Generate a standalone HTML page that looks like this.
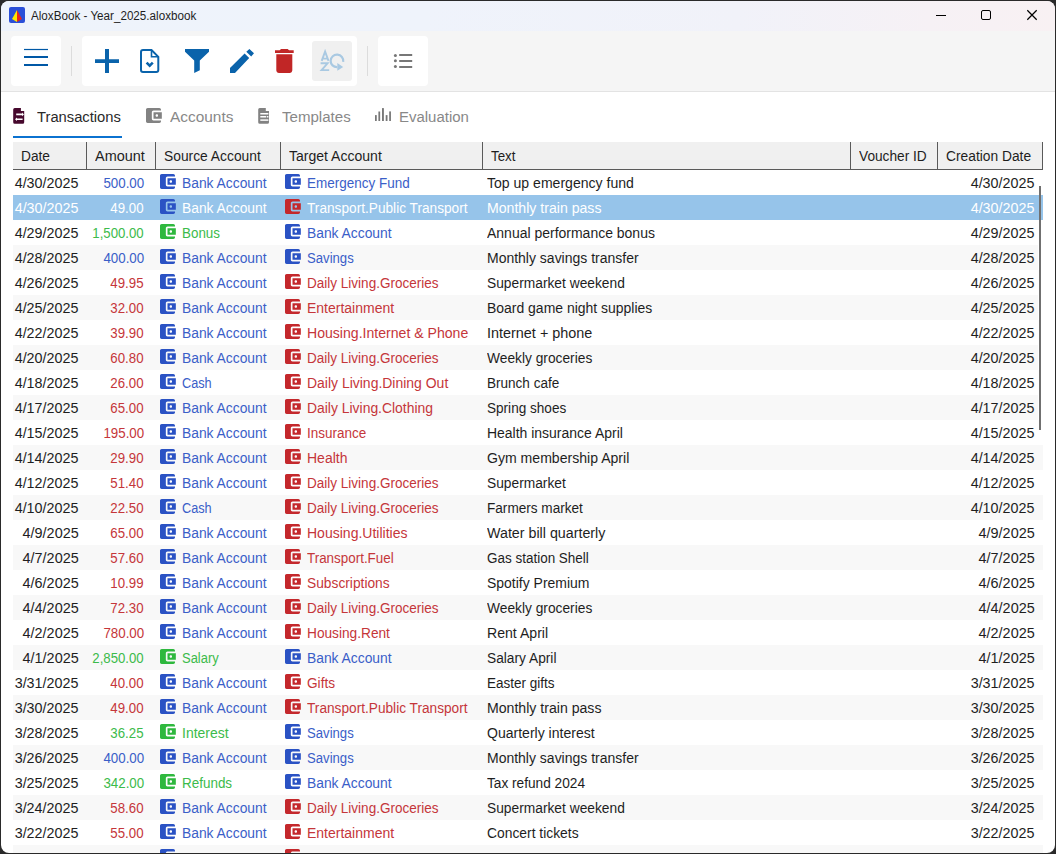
<!DOCTYPE html>
<html><head><meta charset="utf-8"><title>AloxBook - Year_2025.aloxbook</title>
<style>
*{box-sizing:border-box;margin:0;padding:0}
html,body{width:1056px;height:854px;overflow:hidden;background:#2a2a2a}
body{font-family:"Liberation Sans",sans-serif;position:relative;color:#1e1e1e}
#win{position:absolute;left:1px;top:1px;width:1054px;height:852px;border-radius:8px;background:#fff;overflow:hidden}
#title{position:absolute;left:0;top:0;width:1054px;height:30px;background:linear-gradient(90deg,#eef3fb 0%,#eff3fb 40%,#f1f2f9 70%,#f6f1f5 88%,#f8f1f3 100%)}
#title .tt{position:absolute;left:30px;top:7px;font-size:12px;line-height:16px;white-space:nowrap;transform-origin:0 50%;display:inline-block}
#tool{position:absolute;left:0;top:30px;width:1054px;height:61px;background:#f5f5f5;border-bottom:1px solid #e3e3e3}
.panel{position:absolute;top:5px;height:50px;background:#fff;border-radius:4px}
.vsep{position:absolute;top:15px;width:1px;height:30px;background:#dcdcdc}
svg{position:absolute;overflow:visible}
.tab{position:absolute;top:0;font-size:15.5px;line-height:20px;white-space:nowrap;display:inline-block;transform-origin:0 50%}
#grid{position:absolute;left:12px;top:141px;width:1030px;height:711px}
#hdr{position:absolute;left:0;top:0;width:1030px;height:28px;background:#f0f0f0;border-bottom:1px solid #5a5a5a}
#hdr span{position:absolute;top:6px;font-size:13.8px;line-height:18px;white-space:nowrap;transform-origin:0 50%;display:inline-block}
#hdr i{position:absolute;top:0;width:1px;height:28px;background:#5a5a5a}
#rows{position:absolute;left:0;top:28px;width:1030px;height:683px;overflow:hidden}
.row{position:absolute;left:0;width:1030px;height:25px}
.row.alt{background:#f8f8f8}
.row.sel{background:#96c4ea;color:#fff}
.c{position:absolute;top:5px;font-size:13.8px;line-height:18px;white-space:nowrap;display:inline-block}
.c.d{right:964.4px;transform-origin:100% 50%}
.c.a{right:899.3px;transform-origin:100% 50%}
.c.s{left:168.8px;transform-origin:0 50%}
.c.t{left:293.7px;transform-origin:0 50%}
.c.x{left:473.8px;transform-origin:0 50%}
.c.e{right:8.3px;transform-origin:100% 50%}
.b{color:#3a5ec8;fill:#2a52c4}
.r{color:#c5363a;fill:#c4282c}
.g{color:#3cbb4b;fill:#2eb83e}
.sel .c{color:#fff}
.i{width:21px;height:21px;top:1px}
.i.s{left:144px}
.i.t{left:269px}
</style></head><body>
<svg width="0" height="0" style="position:absolute"><defs>
<symbol id="w" viewBox="0 0 24 24"><path d="M21 18v1c0 1.1-.9 2-2 2H5c-1.11 0-2-.9-2-2V5c0-1.1.89-2 2-2h14c1.1 0 2 .9 2 2v1h-9c-1.11 0-2 .9-2 2v8c0 1.1.89 2 2 2h9zm-9-2h10V8H12v8zm4-2.500c-.83 0-1.500-.67-1.500-1.500s.67-1.500 1.500-1.500 1.500.67 1.500 1.500-.67 1.500-1.500 1.500z"/></symbol>
</defs></svg>
<div id="win">
<div id="title">
 <svg style="left:8px;top:6px" width="16" height="16" viewBox="0 0 16 16"><rect width="16" height="16" rx="2" fill="#2a4fd8"/><path d="M8 3 L8 15 L3 12 Z" fill="#ffe600"/><path d="M8 3 L13 12 L8 15 Z" fill="#e8261c"/></svg>
 <span class="tt" style="transform:scaleX(0.9712)">AloxBook - Year_2025.aloxbook</span>
 <svg style="left:0;top:0" width="1054" height="30" viewBox="1 1 1054 30"><g fill="none" stroke="#000"><path d="M936 15.500H946" stroke-width="1"/><rect x="981.500" y="10.500" width="9" height="9" rx="1.500" stroke-width="1"/><path d="M1027.300 10.300L1036.700 19.700M1036.700 10.300L1027.300 19.700" stroke-width="1.250"/></g></svg>
</div>
<div id="tool">
 <div class="panel" style="left:10px;width:50px"></div>
 <div class="vsep" style="left:70px"></div>
 <div class="panel" style="left:81px;width:275px"></div>
 <div class="vsep" style="left:366px"></div>
 <div class="panel" style="left:377px;width:50px"></div>
 <!-- hamburger -->
 <svg style="left:0;top:0" width="440" height="61" viewBox="1 31 440 61">
  <g fill="#0058a6">
   <rect x="24" y="48.900" width="24" height="1.200"/><rect x="24" y="56" width="24" height="2"/><rect x="24" y="64" width="24" height="2"/>
  </g>
  <g fill="#0a63ab">
   <path d="M95 59.200H105V49H109V59.200H119V63H109V73H105V63H95Z"/>
   <path d="M185 49H209V51.800L199.800 60.500V70.200L194.200 73V60.500L185 51.800Z"/>
   <path d="M230 73V68L244.600 53.500L249.200 58L235 73ZM246.300 51.800L249.400 49L254 53.200L251.200 56.500Z"/>
  </g>
  <g fill="none" stroke="#0a63ab" stroke-width="2">
   <path d="M143 50H151.500L158.300 56.800V70a2 2 0 0 1 -2 2H143a2 2 0 0 1 -2 -2V52a2 2 0 0 1 2 -2Z"/>
   <path d="M151.500 50V56.800H158.300" stroke-width="1.600"/>
   <path d="M146.600 62.600L149.700 65.600L152.800 62.600" stroke-width="2.600"/>
  </g>
  <path fill="#c12626" d="M276.300 70.300c0 1.470 1.200 2.670 2.670 2.670h10.670c1.470 0 2.670-1.200 2.670-2.670V54.300H276.300zM293.700 50.300h-4.670l-1.330-1.330h-6.670l-1.330 1.330H275v2.670h18.700z"/>
  <rect x="312" y="41" width="40" height="40" rx="3" fill="#f0f0f0"/>
  <g fill="none" stroke="#a9c9e2" stroke-width="1.900">
   <path d="M321.700 60.800L325.100 51.600L328.500 60.800M322.400 58.600H327.800"/>
   <path d="M320.600 63.300H327.600L321.600 70.100H329.200"/>
   <path d="M343.200 61.800A6.300 6.300 0 1 0 337.200 67.200" stroke-width="2.200"/>
  </g>
  <path fill="#a9c9e2" d="M337.300 63.100L343.200 67L337.300 70.800Z"/>
  <g fill="#777">
   <circle cx="395.400" cy="55.400" r="1.500"/><circle cx="395.400" cy="60.700" r="1.500"/><circle cx="395.400" cy="66.400" r="1.500"/>
   <rect x="399.200" y="54" width="13" height="2"/><rect x="399.200" y="60" width="13" height="2"/><rect x="399.200" y="66" width="13" height="2"/>
  </g>
 </svg>
</div>
<div id="tabs" style="position:absolute;left:0;top:92px;width:1054px;height:48px">
 <svg style="left:12px;top:15px" width="12" height="16" viewBox="0 0 12 16"><path fill="#46082d" d="M1.700 0H7.900V3H11.200V14.300A1.500 1.500 0 0 1 9.700 15.800H1.700A1.500 1.500 0 0 1 0.200 14.300V1.500A1.500 1.500 0 0 1 1.700 0Z"/><path fill="#fff" d="M3.200 5.600H9V4.600L11 6.400L9 8.200V7.200H3.200ZM9.600 10.500H4V9.500L2 11.300L4 13.100V12.100H9.600Z"/></svg>
 <span class="tab" style="left:36px;top:14px;color:#2a2a2a;transform:scaleX(0.9517)">Transactions</span>
 <div style="position:absolute;left:12px;top:43px;width:109px;height:2px;background:#0b72d0"></div>
 <svg style="left:142px;top:12px;fill:#828282" width="21" height="21"><use href="#w" x="0.500" y="0.500" width="20" height="20"/></svg>
 <span class="tab" style="left:169px;top:14px;color:#888;transform:scaleX(0.9943)">Accounts</span>
 <svg style="left:257px;top:15px" width="12" height="16" viewBox="0 0 12 16"><path fill="#828282" d="M1.700 0H7.800V3H11V14.200A1.500 1.500 0 0 1 9.500 15.700H1.700A1.500 1.500 0 0 1 0.200 14.200V1.500A1.500 1.500 0 0 1 1.700 0Z"/><path fill="#fff" d="M2.300 5H10.400V6.500H2.300ZM2.300 7.900H8.200V9.600H2.300ZM8.900 7.900H10.400V9.600H8.900Z"/><path fill="#ececec" d="M2.300 11.200H10.400V12.900H2.300Z"/></svg>
 <span class="tab" style="left:281px;top:14px;color:#888;transform:scaleX(0.9723)">Templates</span>
 <svg style="left:374px;top:15px" width="16" height="13" viewBox="0 0 16 13"><g fill="#787878"><rect x="0" y="7.100" width="1.750" height="5.900"/><rect x="3.400" y="3.500" width="1.750" height="9.500"/><rect x="7" y="0.100" width="1.900" height="12.900"/><rect x="10.700" y="7.100" width="1.800" height="5.900"/><rect x="14.200" y="3.400" width="1.750" height="9.600"/></g></svg>
 <span class="tab" style="left:398px;top:14px;color:#888;transform:scaleX(0.9656)">Evaluation</span>
</div>
<div id="grid">
 <div id="hdr">
  <span style="left:8px;transform:scaleX(0.9948)">Date</span><i style="left:73px"></i>
  <span style="left:82px;transform:scaleX(1.0482)">Amount</span><i style="left:142px"></i>
  <span style="left:151px;transform:scaleX(1.0014)">Source Account</span><i style="left:267px"></i>
  <span style="left:276px;transform:scaleX(1.0170)">Target Account</span><i style="left:469px"></i>
  <span style="left:478px;transform:scaleX(0.9663)">Text</span><i style="left:837px"></i>
  <span style="left:846px;transform:scaleX(0.9923)">Voucher ID</span><i style="left:924px"></i>
  <span style="left:933px;transform:scaleX(0.9992)">Creation Date</span><i style="left:1029px"></i>
 </div>
 <div id="rows">
<div class="row" style="top:0px"><span class="c d" style="transform:scaleX(1.0380)">4/30/2025</span><span class="c a b" style="transform:scaleX(0.9660)">500.00</span><svg class="i s b"><use href="#w" x="0.500" y="0.500" width="20" height="20"/></svg><span class="c s b" style="transform:scaleX(1.0026)">Bank Account</span><svg class="i t b"><use href="#w" x="0.500" y="0.500" width="20" height="20"/></svg><span class="c t b" style="transform:scaleX(0.9779)">Emergency Fund</span><span class="c x" style="transform:scaleX(1.0182)">Top up emergency fund</span><span class="c e" style="transform:scaleX(1.0380)">4/30/2025</span></div>
<div class="row alt sel" style="top:25px"><span class="c d" style="transform:scaleX(1.0380)">4/30/2025</span><span class="c a r" style="transform:scaleX(0.9621)">49.00</span><svg class="i s b"><use href="#w" x="0.500" y="0.500" width="20" height="20"/></svg><span class="c s b" style="transform:scaleX(1.0026)">Bank Account</span><svg class="i t r"><use href="#w" x="0.500" y="0.500" width="20" height="20"/></svg><span class="c t r" style="transform:scaleX(0.9906)">Transport.Public Transport</span><span class="c x" style="transform:scaleX(1.0222)">Monthly train pass</span><span class="c e" style="transform:scaleX(1.0380)">4/30/2025</span></div>
<div class="row" style="top:50px"><span class="c d" style="transform:scaleX(1.0380)">4/29/2025</span><span class="c a g" style="transform:scaleX(0.9559)">1,500.00</span><svg class="i s g"><use href="#w" x="0.500" y="0.500" width="20" height="20"/></svg><span class="c s g" style="transform:scaleX(0.9711)">Bonus</span><svg class="i t b"><use href="#w" x="0.500" y="0.500" width="20" height="20"/></svg><span class="c t b" style="transform:scaleX(1.0026)">Bank Account</span><span class="c x" style="transform:scaleX(1.0135)">Annual performance bonus</span><span class="c e" style="transform:scaleX(1.0380)">4/29/2025</span></div>
<div class="row alt" style="top:75px"><span class="c d" style="transform:scaleX(1.0380)">4/28/2025</span><span class="c a b" style="transform:scaleX(0.9660)">400.00</span><svg class="i s b"><use href="#w" x="0.500" y="0.500" width="20" height="20"/></svg><span class="c s b" style="transform:scaleX(1.0026)">Bank Account</span><svg class="i t b"><use href="#w" x="0.500" y="0.500" width="20" height="20"/></svg><span class="c t b" style="transform:scaleX(0.9517)">Savings</span><span class="c x" style="transform:scaleX(1.0137)">Monthly savings transfer</span><span class="c e" style="transform:scaleX(1.0380)">4/28/2025</span></div>
<div class="row" style="top:100px"><span class="c d" style="transform:scaleX(1.0380)">4/26/2025</span><span class="c a r" style="transform:scaleX(0.9621)">49.95</span><svg class="i s b"><use href="#w" x="0.500" y="0.500" width="20" height="20"/></svg><span class="c s b" style="transform:scaleX(1.0026)">Bank Account</span><svg class="i t r"><use href="#w" x="0.500" y="0.500" width="20" height="20"/></svg><span class="c t r" style="transform:scaleX(0.9804)">Daily Living.Groceries</span><span class="c x" style="transform:scaleX(0.9984)">Supermarket weekend</span><span class="c e" style="transform:scaleX(1.0380)">4/26/2025</span></div>
<div class="row alt" style="top:125px"><span class="c d" style="transform:scaleX(1.0380)">4/25/2025</span><span class="c a r" style="transform:scaleX(0.9621)">32.00</span><svg class="i s b"><use href="#w" x="0.500" y="0.500" width="20" height="20"/></svg><span class="c s b" style="transform:scaleX(1.0026)">Bank Account</span><svg class="i t r"><use href="#w" x="0.500" y="0.500" width="20" height="20"/></svg><span class="c t r" style="transform:scaleX(1.0143)">Entertainment</span><span class="c x" style="transform:scaleX(1.0113)">Board game night supplies</span><span class="c e" style="transform:scaleX(1.0380)">4/25/2025</span></div>
<div class="row" style="top:150px"><span class="c d" style="transform:scaleX(1.0380)">4/22/2025</span><span class="c a r" style="transform:scaleX(0.9621)">39.90</span><svg class="i s b"><use href="#w" x="0.500" y="0.500" width="20" height="20"/></svg><span class="c s b" style="transform:scaleX(1.0026)">Bank Account</span><svg class="i t r"><use href="#w" x="0.500" y="0.500" width="20" height="20"/></svg><span class="c t r" style="transform:scaleX(1.0204)">Housing.Internet &amp; Phone</span><span class="c x" style="transform:scaleX(1.0446)">Internet + phone</span><span class="c e" style="transform:scaleX(1.0380)">4/22/2025</span></div>
<div class="row alt" style="top:175px"><span class="c d" style="transform:scaleX(1.0380)">4/20/2025</span><span class="c a r" style="transform:scaleX(0.9621)">60.80</span><svg class="i s b"><use href="#w" x="0.500" y="0.500" width="20" height="20"/></svg><span class="c s b" style="transform:scaleX(1.0026)">Bank Account</span><svg class="i t r"><use href="#w" x="0.500" y="0.500" width="20" height="20"/></svg><span class="c t r" style="transform:scaleX(0.9804)">Daily Living.Groceries</span><span class="c x" style="transform:scaleX(0.9973)">Weekly groceries</span><span class="c e" style="transform:scaleX(1.0380)">4/20/2025</span></div>
<div class="row" style="top:200px"><span class="c d" style="transform:scaleX(1.0380)">4/18/2025</span><span class="c a r" style="transform:scaleX(0.9621)">26.00</span><svg class="i s b"><use href="#w" x="0.500" y="0.500" width="20" height="20"/></svg><span class="c s b" style="transform:scaleX(0.9202)">Cash</span><svg class="i t r"><use href="#w" x="0.500" y="0.500" width="20" height="20"/></svg><span class="c t r" style="transform:scaleX(1.0122)">Daily Living.Dining Out</span><span class="c x" style="transform:scaleX(0.9808)">Brunch cafe</span><span class="c e" style="transform:scaleX(1.0380)">4/18/2025</span></div>
<div class="row alt" style="top:225px"><span class="c d" style="transform:scaleX(1.0380)">4/17/2025</span><span class="c a r" style="transform:scaleX(0.9621)">65.00</span><svg class="i s b"><use href="#w" x="0.500" y="0.500" width="20" height="20"/></svg><span class="c s b" style="transform:scaleX(1.0026)">Bank Account</span><svg class="i t r"><use href="#w" x="0.500" y="0.500" width="20" height="20"/></svg><span class="c t r" style="transform:scaleX(1.0081)">Daily Living.Clothing</span><span class="c x" style="transform:scaleX(0.9837)">Spring shoes</span><span class="c e" style="transform:scaleX(1.0380)">4/17/2025</span></div>
<div class="row" style="top:250px"><span class="c d" style="transform:scaleX(1.0380)">4/15/2025</span><span class="c a r" style="transform:scaleX(0.9660)">195.00</span><svg class="i s b"><use href="#w" x="0.500" y="0.500" width="20" height="20"/></svg><span class="c s b" style="transform:scaleX(1.0026)">Bank Account</span><svg class="i t r"><use href="#w" x="0.500" y="0.500" width="20" height="20"/></svg><span class="c t r" style="transform:scaleX(0.9769)">Insurance</span><span class="c x" style="transform:scaleX(1.0123)">Health insurance April</span><span class="c e" style="transform:scaleX(1.0380)">4/15/2025</span></div>
<div class="row alt" style="top:275px"><span class="c d" style="transform:scaleX(1.0380)">4/14/2025</span><span class="c a r" style="transform:scaleX(0.9621)">29.90</span><svg class="i s b"><use href="#w" x="0.500" y="0.500" width="20" height="20"/></svg><span class="c s b" style="transform:scaleX(1.0026)">Bank Account</span><svg class="i t r"><use href="#w" x="0.500" y="0.500" width="20" height="20"/></svg><span class="c t r" style="transform:scaleX(1.0136)">Health</span><span class="c x" style="transform:scaleX(1.0198)">Gym membership April</span><span class="c e" style="transform:scaleX(1.0380)">4/14/2025</span></div>
<div class="row" style="top:300px"><span class="c d" style="transform:scaleX(1.0380)">4/12/2025</span><span class="c a r" style="transform:scaleX(0.9621)">51.40</span><svg class="i s b"><use href="#w" x="0.500" y="0.500" width="20" height="20"/></svg><span class="c s b" style="transform:scaleX(1.0026)">Bank Account</span><svg class="i t r"><use href="#w" x="0.500" y="0.500" width="20" height="20"/></svg><span class="c t r" style="transform:scaleX(0.9804)">Daily Living.Groceries</span><span class="c x" style="transform:scaleX(0.9979)">Supermarket</span><span class="c e" style="transform:scaleX(1.0380)">4/12/2025</span></div>
<div class="row alt" style="top:325px"><span class="c d" style="transform:scaleX(1.0380)">4/10/2025</span><span class="c a r" style="transform:scaleX(0.9621)">22.50</span><svg class="i s b"><use href="#w" x="0.500" y="0.500" width="20" height="20"/></svg><span class="c s b" style="transform:scaleX(0.9202)">Cash</span><svg class="i t r"><use href="#w" x="0.500" y="0.500" width="20" height="20"/></svg><span class="c t r" style="transform:scaleX(0.9804)">Daily Living.Groceries</span><span class="c x" style="transform:scaleX(0.9849)">Farmers market</span><span class="c e" style="transform:scaleX(1.0380)">4/10/2025</span></div>
<div class="row" style="top:350px"><span class="c d" style="transform:scaleX(1.0458)">4/9/2025</span><span class="c a r" style="transform:scaleX(0.9621)">65.00</span><svg class="i s b"><use href="#w" x="0.500" y="0.500" width="20" height="20"/></svg><span class="c s b" style="transform:scaleX(1.0026)">Bank Account</span><svg class="i t r"><use href="#w" x="0.500" y="0.500" width="20" height="20"/></svg><span class="c t r" style="transform:scaleX(1.0160)">Housing.Utilities</span><span class="c x" style="transform:scaleX(1.0343)">Water bill quarterly</span><span class="c e" style="transform:scaleX(1.0458)">4/9/2025</span></div>
<div class="row alt" style="top:375px"><span class="c d" style="transform:scaleX(1.0458)">4/7/2025</span><span class="c a r" style="transform:scaleX(0.9621)">57.60</span><svg class="i s b"><use href="#w" x="0.500" y="0.500" width="20" height="20"/></svg><span class="c s b" style="transform:scaleX(1.0026)">Bank Account</span><svg class="i t r"><use href="#w" x="0.500" y="0.500" width="20" height="20"/></svg><span class="c t r" style="transform:scaleX(0.9719)">Transport.Fuel</span><span class="c x" style="transform:scaleX(0.9763)">Gas station Shell</span><span class="c e" style="transform:scaleX(1.0458)">4/7/2025</span></div>
<div class="row" style="top:400px"><span class="c d" style="transform:scaleX(1.0458)">4/6/2025</span><span class="c a r" style="transform:scaleX(0.9621)">10.99</span><svg class="i s b"><use href="#w" x="0.500" y="0.500" width="20" height="20"/></svg><span class="c s b" style="transform:scaleX(1.0026)">Bank Account</span><svg class="i t r"><use href="#w" x="0.500" y="0.500" width="20" height="20"/></svg><span class="c t r" style="transform:scaleX(0.9980)">Subscriptions</span><span class="c x" style="transform:scaleX(1.0120)">Spotify Premium</span><span class="c e" style="transform:scaleX(1.0458)">4/6/2025</span></div>
<div class="row alt" style="top:425px"><span class="c d" style="transform:scaleX(1.0458)">4/4/2025</span><span class="c a r" style="transform:scaleX(0.9621)">72.30</span><svg class="i s b"><use href="#w" x="0.500" y="0.500" width="20" height="20"/></svg><span class="c s b" style="transform:scaleX(1.0026)">Bank Account</span><svg class="i t r"><use href="#w" x="0.500" y="0.500" width="20" height="20"/></svg><span class="c t r" style="transform:scaleX(0.9804)">Daily Living.Groceries</span><span class="c x" style="transform:scaleX(0.9973)">Weekly groceries</span><span class="c e" style="transform:scaleX(1.0458)">4/4/2025</span></div>
<div class="row" style="top:450px"><span class="c d" style="transform:scaleX(1.0458)">4/2/2025</span><span class="c a r" style="transform:scaleX(0.9660)">780.00</span><svg class="i s b"><use href="#w" x="0.500" y="0.500" width="20" height="20"/></svg><span class="c s b" style="transform:scaleX(1.0026)">Bank Account</span><svg class="i t r"><use href="#w" x="0.500" y="0.500" width="20" height="20"/></svg><span class="c t r" style="transform:scaleX(0.9919)">Housing.Rent</span><span class="c x" style="transform:scaleX(1.0214)">Rent April</span><span class="c e" style="transform:scaleX(1.0458)">4/2/2025</span></div>
<div class="row alt" style="top:475px"><span class="c d" style="transform:scaleX(1.0458)">4/1/2025</span><span class="c a g" style="transform:scaleX(0.9559)">2,850.00</span><svg class="i s g"><use href="#w" x="0.500" y="0.500" width="20" height="20"/></svg><span class="c s g" style="transform:scaleX(0.9383)">Salary</span><svg class="i t b"><use href="#w" x="0.500" y="0.500" width="20" height="20"/></svg><span class="c t b" style="transform:scaleX(1.0026)">Bank Account</span><span class="c x" style="transform:scaleX(0.9951)">Salary April</span><span class="c e" style="transform:scaleX(1.0458)">4/1/2025</span></div>
<div class="row" style="top:500px"><span class="c d" style="transform:scaleX(1.0380)">3/31/2025</span><span class="c a r" style="transform:scaleX(0.9621)">40.00</span><svg class="i s b"><use href="#w" x="0.500" y="0.500" width="20" height="20"/></svg><span class="c s b" style="transform:scaleX(1.0026)">Bank Account</span><svg class="i t r"><use href="#w" x="0.500" y="0.500" width="20" height="20"/></svg><span class="c t r" style="transform:scaleX(0.9890)">Gifts</span><span class="c x" style="transform:scaleX(0.9795)">Easter gifts</span><span class="c e" style="transform:scaleX(1.0380)">3/31/2025</span></div>
<div class="row alt" style="top:525px"><span class="c d" style="transform:scaleX(1.0380)">3/30/2025</span><span class="c a r" style="transform:scaleX(0.9621)">49.00</span><svg class="i s b"><use href="#w" x="0.500" y="0.500" width="20" height="20"/></svg><span class="c s b" style="transform:scaleX(1.0026)">Bank Account</span><svg class="i t r"><use href="#w" x="0.500" y="0.500" width="20" height="20"/></svg><span class="c t r" style="transform:scaleX(0.9906)">Transport.Public Transport</span><span class="c x" style="transform:scaleX(1.0222)">Monthly train pass</span><span class="c e" style="transform:scaleX(1.0380)">3/30/2025</span></div>
<div class="row" style="top:550px"><span class="c d" style="transform:scaleX(1.0380)">3/28/2025</span><span class="c a g" style="transform:scaleX(0.9621)">36.25</span><svg class="i s g"><use href="#w" x="0.500" y="0.500" width="20" height="20"/></svg><span class="c s g" style="transform:scaleX(1.0123)">Interest</span><svg class="i t b"><use href="#w" x="0.500" y="0.500" width="20" height="20"/></svg><span class="c t b" style="transform:scaleX(0.9517)">Savings</span><span class="c x" style="transform:scaleX(1.0170)">Quarterly interest</span><span class="c e" style="transform:scaleX(1.0380)">3/28/2025</span></div>
<div class="row alt" style="top:575px"><span class="c d" style="transform:scaleX(1.0380)">3/26/2025</span><span class="c a b" style="transform:scaleX(0.9660)">400.00</span><svg class="i s b"><use href="#w" x="0.500" y="0.500" width="20" height="20"/></svg><span class="c s b" style="transform:scaleX(1.0026)">Bank Account</span><svg class="i t b"><use href="#w" x="0.500" y="0.500" width="20" height="20"/></svg><span class="c t b" style="transform:scaleX(0.9517)">Savings</span><span class="c x" style="transform:scaleX(1.0137)">Monthly savings transfer</span><span class="c e" style="transform:scaleX(1.0380)">3/26/2025</span></div>
<div class="row" style="top:600px"><span class="c d" style="transform:scaleX(1.0380)">3/25/2025</span><span class="c a g" style="transform:scaleX(0.9660)">342.00</span><svg class="i s g"><use href="#w" x="0.500" y="0.500" width="20" height="20"/></svg><span class="c s g" style="transform:scaleX(0.9746)">Refunds</span><svg class="i t b"><use href="#w" x="0.500" y="0.500" width="20" height="20"/></svg><span class="c t b" style="transform:scaleX(1.0026)">Bank Account</span><span class="c x" style="transform:scaleX(0.9904)">Tax refund 2024</span><span class="c e" style="transform:scaleX(1.0380)">3/25/2025</span></div>
<div class="row alt" style="top:625px"><span class="c d" style="transform:scaleX(1.0380)">3/24/2025</span><span class="c a r" style="transform:scaleX(0.9621)">58.60</span><svg class="i s b"><use href="#w" x="0.500" y="0.500" width="20" height="20"/></svg><span class="c s b" style="transform:scaleX(1.0026)">Bank Account</span><svg class="i t r"><use href="#w" x="0.500" y="0.500" width="20" height="20"/></svg><span class="c t r" style="transform:scaleX(0.9804)">Daily Living.Groceries</span><span class="c x" style="transform:scaleX(0.9984)">Supermarket weekend</span><span class="c e" style="transform:scaleX(1.0380)">3/24/2025</span></div>
<div class="row" style="top:650px"><span class="c d" style="transform:scaleX(1.0380)">3/22/2025</span><span class="c a r" style="transform:scaleX(0.9621)">55.00</span><svg class="i s b"><use href="#w" x="0.500" y="0.500" width="20" height="20"/></svg><span class="c s b" style="transform:scaleX(1.0026)">Bank Account</span><svg class="i t r"><use href="#w" x="0.500" y="0.500" width="20" height="20"/></svg><span class="c t r" style="transform:scaleX(1.0143)">Entertainment</span><span class="c x" style="transform:scaleX(1.0037)">Concert tickets</span><span class="c e" style="transform:scaleX(1.0380)">3/22/2025</span></div>
<div class="row alt" style="top:675px"><svg class="i s b"><use href="#w" x="0.500" y="0.500" width="20" height="20"/></svg><svg class="i t r"><use href="#w" x="0.500" y="0.500" width="20" height="20"/></svg></div>
 </div>
 <div style="position:absolute;left:1025px;top:28px;width:5px;height:25px;background:#fff"></div><div style="position:absolute;left:1025px;top:78px;width:5px;height:212px;background:#fff"></div><div style="position:absolute;left:1026px;top:44px;width:2px;height:244px;background:#707070"></div>
</div>
</div>
</body></html>
